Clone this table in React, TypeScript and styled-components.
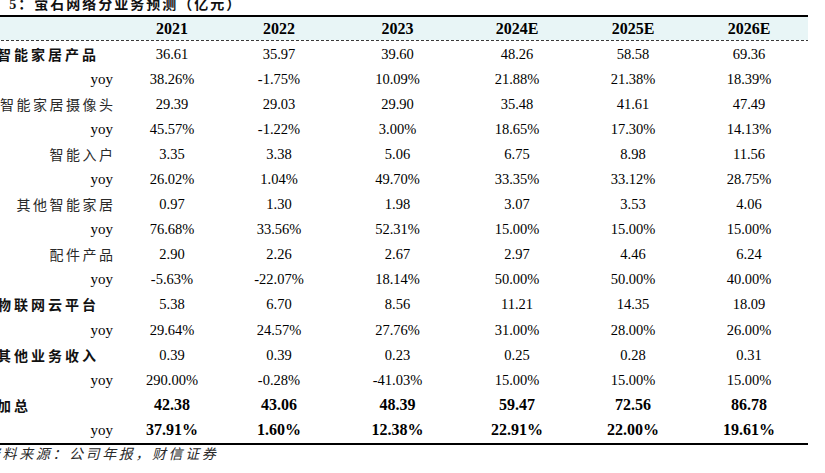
import React from "react";
import styled, { createGlobalStyle } from "styled-components";

const SERIF = `"Liberation Serif", "Times New Roman", Tinos, serif`;
const CJK = `"Noto Sans CJK SC", "Noto Sans CJK TC", sans-serif`;

const GlobalStyle = createGlobalStyle`
  html, body {
    margin: 0;
    padding: 0;
    background: #fff;
  }
  body {
    width: 825px;
    height: 473px;
    overflow: hidden;
    font-family: ${SERIF};
    color: #000;
  }
`;

const COLS = "137px 98px 116px 121px 118px 114px 118px";

const Page = styled.div`
  width: 822px;
  margin: -5px 0 0 -14px;
`;

const Title = styled.div`
  height: 16px;
  line-height: 16px;
  font-family: ${CJK};
  font-size: 14px;
  font-weight: 700;
  letter-spacing: 2px;
  margin-bottom: 4px;
  white-space: nowrap;
  color: #111;
`;

const Num = styled.span`
  font-family: ${SERIF};
  margin-left: 2px;
`;

const Table = styled.div`
  border-top: 2px solid #000;
  border-bottom: 2px solid #000;
`;

const HeadRow = styled.div`
  display: grid;
  grid-template-columns: ${COLS};
  align-items: center;
  height: 23px;
  background: #e8f5f6;
`;

const HeadCell = styled.div`
  text-align: center;
  font-family: ${SERIF};
  font-size: 16px;
  font-weight: 700;
  line-height: 23px;
`;

const DashRule = styled.div`
  height: 1px;
  background: repeating-linear-gradient(90deg, #3a3a3a 0 3px, transparent 3px 5px);
`;

const Row = styled.div`
  display: grid;
  grid-template-columns: ${COLS};
  align-items: center;
  height: 25.1px;
`;

type Kind = "cat" | "sub" | "yoy";

const Label = styled.div<{ $kind: Kind }>`
  white-space: nowrap;
  line-height: 20px;
  font-family: ${(p) => (p.$kind === "yoy" ? SERIF : CJK)};
  font-size: ${(p) => (p.$kind === "yoy" ? 15 : 14)}px;
  text-align: ${(p) => (p.$kind === "cat" ? "left" : "right")};
  font-weight: ${(p) => (p.$kind === "cat" ? 700 : 400)};
  letter-spacing: ${(p) => (p.$kind === "yoy" ? "0" : p.$kind === "cat" ? "3px" : "2.5px")};
  padding: ${(p) =>
    p.$kind === "cat" ? "0 0 0 11px" : p.$kind === "sub" ? "0 7.5px 0 0" : "0 10px 0 0"};
  color: ${(p) => (p.$kind === "yoy" ? "#000" : p.$kind === "cat" ? "#111" : "#2a2a2a")};
`;

const Value = styled.div<{ $bold?: boolean }>`
  text-align: center;
  line-height: 20px;
  font-family: ${SERIF};
  font-size: ${(p) => (p.$bold ? 16 : 14.5)}px;
  font-weight: ${(p) => (p.$bold ? 700 : 400)};
`;

const Source = styled.div`
  height: 16px;
  line-height: 16px;
  font-family: ${CJK};
  font-size: 14px;
  font-style: italic;
  letter-spacing: 2.6px;
  white-space: nowrap;
  color: #2a2a2a;
`;

const years = ["2021", "2022", "2023", "2024E", "2025E", "2026E"];

const rows: { label: string; kind: Kind; bold?: boolean; vals: string[] }[] = [
  { label: "智能家居产品", kind: "cat", vals: ["36.61", "35.97", "39.60", "48.26", "58.58", "69.36"] },
  { label: "yoy", kind: "yoy", vals: ["38.26%", "-1.75%", "10.09%", "21.88%", "21.38%", "18.39%"] },
  { label: "智能家居摄像头", kind: "sub", vals: ["29.39", "29.03", "29.90", "35.48", "41.61", "47.49"] },
  { label: "yoy", kind: "yoy", vals: ["45.57%", "-1.22%", "3.00%", "18.65%", "17.30%", "14.13%"] },
  { label: "智能入户", kind: "sub", vals: ["3.35", "3.38", "5.06", "6.75", "8.98", "11.56"] },
  { label: "yoy", kind: "yoy", vals: ["26.02%", "1.04%", "49.70%", "33.35%", "33.12%", "28.75%"] },
  { label: "其他智能家居", kind: "sub", vals: ["0.97", "1.30", "1.98", "3.07", "3.53", "4.06"] },
  { label: "yoy", kind: "yoy", vals: ["76.68%", "33.56%", "52.31%", "15.00%", "15.00%", "15.00%"] },
  { label: "配件产品", kind: "sub", vals: ["2.90", "2.26", "2.67", "2.97", "4.46", "6.24"] },
  { label: "yoy", kind: "yoy", vals: ["-5.63%", "-22.07%", "18.14%", "50.00%", "50.00%", "40.00%"] },
  { label: "物联网云平台", kind: "cat", vals: ["5.38", "6.70", "8.56", "11.21", "14.35", "18.09"] },
  { label: "yoy", kind: "yoy", vals: ["29.64%", "24.57%", "27.76%", "31.00%", "28.00%", "26.00%"] },
  { label: "其他业务收入", kind: "cat", vals: ["0.39", "0.39", "0.23", "0.25", "0.28", "0.31"] },
  { label: "yoy", kind: "yoy", vals: ["290.00%", "-0.28%", "-41.03%", "15.00%", "15.00%", "15.00%"] },
  { label: "加总", kind: "cat", bold: true, vals: ["42.38", "43.06", "48.39", "59.47", "72.56", "86.78"] },
  { label: "yoy", kind: "yoy", bold: true, vals: ["37.91%", "1.60%", "12.38%", "22.91%", "22.00%", "19.61%"] },
];

export default function App() {
  return (
    <>
      <GlobalStyle />
      <Page>
        <Title>
          表 <Num>5</Num>：萤石网络分业务预测（亿元）
        </Title>
        <Table>
          <HeadRow>
            <div />
            {years.map((y) => (
              <HeadCell key={y}>{y}</HeadCell>
            ))}
          </HeadRow>
          <DashRule />
          {rows.map((r, i) => (
            <Row key={i}>
              <Label $kind={r.kind}>{r.label}</Label>
              {r.vals.map((v, j) => (
                <Value key={j} $bold={r.bold}>
                  {v}
                </Value>
              ))}
            </Row>
          ))}
        </Table>
        <Source>资料来源：公司年报，财信证券</Source>
      </Page>
    </>
  );
}
